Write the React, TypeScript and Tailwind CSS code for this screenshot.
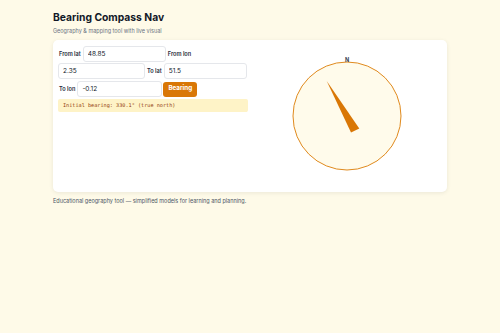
import React from 'react';

const fieldCls =
  'h-[16px] rounded-[3px] border border-gray-200 bg-white px-[4px] text-[6.5px] text-gray-900 outline-none';
const labelCls = 'px-[1px] text-[5.6px] font-semibold text-gray-800';

export default function App() {
  // needle coords are in the svg's own pixel space (center 60,70)
  const needle = '39.7,35 64,86.5 72.3,82.5';

  return (
    <div
      className="min-h-[333px] w-[500px] bg-[#fefae8] text-gray-900"
      style={{ fontFamily: 'Inter, "Noto Sans", sans-serif' }}
    >
      <div className="mx-auto w-[394px] pt-[10px]">
        <h1 className="text-[10.3px] font-bold leading-[14px] text-[#111827]">Bearing Compass Nav</h1>
        <p className="mt-[3px] text-[5.5px] leading-[8px] text-gray-500">Geography &amp; mapping tool with live visual</p>

        <div className="mt-[5px] flex rounded-[5px] bg-white px-[5px] py-[6px] shadow-[0_1px_4px_rgba(0,0,0,0.08)]">
          <div className="w-[190px] self-start">
            <div className="flex flex-wrap items-center gap-x-[1px] gap-y-[1px]">
              <label className={labelCls}>From lat</label>
              <input className={`${fieldCls} w-[83px]`} defaultValue="48.85" />
              <label className={labelCls}>From lon</label>
              <input className={`${fieldCls} w-[87px]`} defaultValue="2.35" />
              <label className={labelCls}>To lat</label>
              <input className={`${fieldCls} w-[83px]`} defaultValue="51.5" />
              <label className={`${labelCls} mt-[1px]`}>To lon</label>
              <input className={`${fieldCls} mt-[1px] w-[85px]`} defaultValue="-0.12" />
              <button className="mt-[1px] h-[15px] rounded-[3px] bg-[#d97706] px-[5px] text-[6.3px] font-bold text-white">
                Bearing
              </button>
            </div>
            <div
              className="mt-[2px] h-[13px] rounded-[2px] bg-[#fef3c7] px-[5px] text-[5.2px] leading-[13px] text-[#92400e]"
              style={{ fontFamily: '"DejaVu Sans Mono", "Liberation Mono", monospace' }}
            >
              Initial bearing: 330.1° (true north)
            </div>
          </div>

          <div className="flex flex-1 items-center justify-center pl-[4px]">
            <svg width="120" height="140" viewBox="0 0 120 140">
              <circle cx="60" cy="70" r="54" fill="#fffbeb" stroke="#e08a1e" strokeWidth="1" />
              <text x="60" y="15.5" textAnchor="middle" fontSize="5.5" fontWeight="700" fill="#374151" fontFamily="Inter, sans-serif">
                N
              </text>
              <polygon points={needle} fill="#d97706" />
            </svg>
          </div>
        </div>

        <p className="mt-[5px] text-[5.5px] leading-[8px] text-gray-600">
          Educational geography tool — simplified models for learning and planning.
        </p>
      </div>
    </div>
  );
}
